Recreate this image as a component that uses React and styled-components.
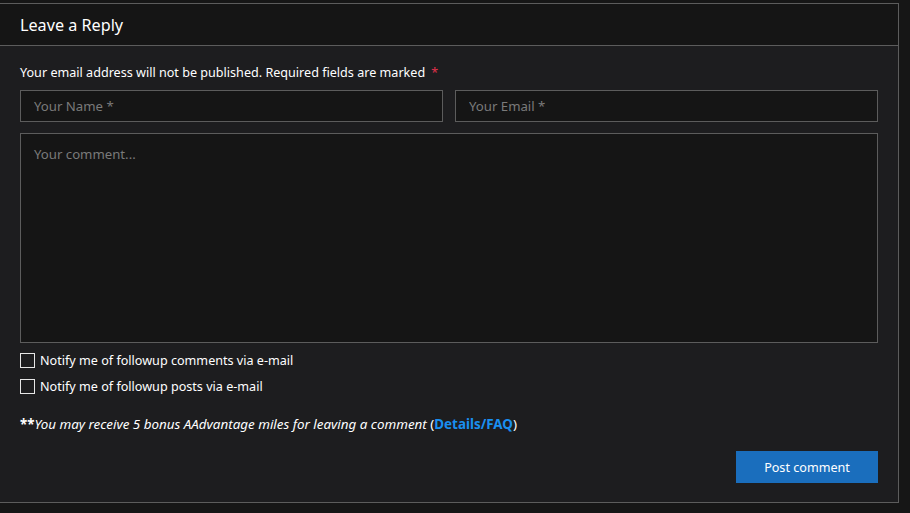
import styled, { createGlobalStyle } from 'styled-components';

const GlobalStyle = createGlobalStyle`
  html, body {
    margin: 0;
    padding: 0;
    background: #161616;
    font-family: "Noto Sans", "Open Sans", sans-serif;
    color: #fff;
  }
  * { box-sizing: border-box; }
`;

const Page = styled.div`
  padding-top: 3px;
  height: 513px;
  overflow: hidden;
`;

const Card = styled.section`
  width: 900px;
  margin-left: -1px;
  border: 1px solid #5c5c5c;
  background: #1d1d1f;
`;

const Header = styled.header`
  height: 42px;
  display: flex;
  align-items: center;
  padding: 0 20px;
  background: #151515;
  border-bottom: 1px solid #5c5c5c;
  font-size: 16.2px;
`;

const Body = styled.form`
  padding: 18px 20px 19px 20px;
  display: flex;
  flex-direction: column;
`;

const Notice = styled.p`
  margin: 0 0 9px;
  font-size: 12.6px;
  line-height: 17px;

  span {
    color: #e0314b;
    margin-left: 6px;
  }
`;

const Row = styled.div`
  display: grid;
  grid-template-columns: 1fr 1fr;
  gap: 12px;
  margin-bottom: 11px;
`;

const fieldBase = `
  background: #151515;
  border: 1px solid #5c5c5c;
  color: #ddd;
  font-family: "Noto Sans", "Open Sans", sans-serif;
  font-size: 13.2px;
  padding: 0 13px;
  outline: none;
  &::placeholder { color: #7a7a7a; }
`;

const Input = styled.input`
  ${fieldBase}
  height: 32px;
  width: 100%;
`;

const TextArea = styled.textarea`
  ${fieldBase}
  height: 210px;
  width: 100%;
  resize: none;
  padding-top: 11px;
  display: block;
  margin-bottom: 10px;
`;

const Check = styled.label`
  display: flex;
  align-items: center;
  gap: 5px;
  height: 14px;
  margin: 0 0 12px;
  font-size: 12.6px;

  &::before {
    content: '';
    width: 13px;
    height: 13px;
    border: 1px solid #e6e6e6;
  }
`;

const Note = styled.p`
  margin: 10px 0 0;
  font-size: 13.4px;
  font-style: italic;

  b { font-style: normal; }
  a {
    color: #1a8ff0;
    font-weight: 700;
    font-style: normal;
    text-decoration: none;
  }
  em { font-style: normal; }
`;

const Actions = styled.div`
  display: flex;
  justify-content: flex-end;
  margin-top: 18px;
`;

const Button = styled.button`
  width: 142px;
  height: 32px;
  border: none;
  background: #1a6ebd;
  color: #fff;
  font-family: "Noto Sans", sans-serif;
  font-size: 12.6px;
  cursor: pointer;
`;

export default function App() {
  return (
    <Page>
      <GlobalStyle />
      <Card>
        <Header>Leave a Reply</Header>
        <Body>
          <Notice>
            Your email address will not be published. Required fields are marked<span>*</span>
          </Notice>
          <Row>
            <Input placeholder="Your Name *" />
            <Input placeholder="Your Email *" />
          </Row>
          <TextArea placeholder="Your comment..." />
          <Check>Notify me of followup comments via e-mail</Check>
          <Check>Notify me of followup posts via e-mail</Check>
          <Note>
            <b>**</b>You may receive 5 bonus AAdvantage miles for leaving a comment <em>(</em>
            <a href="#faq">Details/FAQ</a>
            <em>)</em>
          </Note>
          <Actions>
            <Button type="button">Post comment</Button>
          </Actions>
        </Body>
      </Card>
    </Page>
  );
}
